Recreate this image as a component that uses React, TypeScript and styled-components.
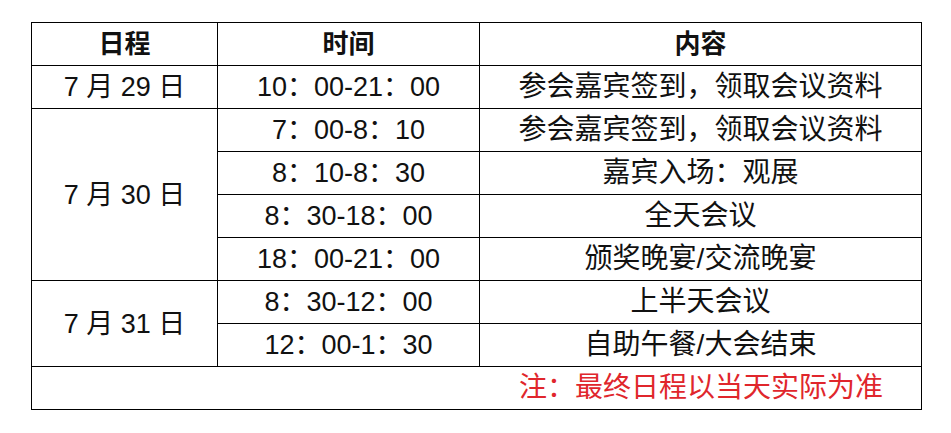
import React from 'react';
import styled, {createGlobalStyle} from 'styled-components';

const GlobalStyle = createGlobalStyle`
  html, body {
    margin: 0;
    background: #fff;
  }
`;

type Slot = {time: string, content: string};
type Day = {date: string, slots: Slot[]};

const schedule: Day[] = [
  {date: '7 月 29 日', slots: [
    {time: '10：00-21：00', content: '参会嘉宾签到，领取会议资料'},
  ]},
  {date: '7 月 30 日', slots: [
    {time: '7：00-8：10', content: '参会嘉宾签到，领取会议资料'},
    {time: '8：10-8：30', content: '嘉宾入场：观展'},
    {time: '8：30-18：00', content: '全天会议'},
    {time: '18：00-21：00', content: '颁奖晚宴/交流晚宴'},
  ]},
  {date: '7 月 31 日', slots: [
    {time: '8：30-12：00', content: '上半天会议'},
    {time: '12：00-1：30', content: '自助午餐/大会结束'},
  ]},
];

const App = () => {
  return (
    <>
      <GlobalStyle/>
      <Page>
        <Table>
          <colgroup>
            <col style={{width: 186}}/>
            <col style={{width: 262}}/>
            <col style={{width: 442}}/>
          </colgroup>
          <thead>
            <tr>
              <Head>日程</Head>
              <Head>时间</Head>
              <Head>内容</Head>
            </tr>
          </thead>
          <tbody>
            {schedule.map(day => day.slots.map((slot, i) => (
              <tr key={day.date + i}>
                {i === 0 && <Cell rowSpan={day.slots.length}>{day.date}</Cell>}
                <Cell>{slot.time}</Cell>
                <Cell $size={28}>{slot.content}</Cell>
              </tr>
            )))}
            <tr>
              <Note colSpan={3} $size={28}>注：最终日程以当天实际为准</Note>
            </tr>
          </tbody>
        </Table>
      </Page>
    </>
  );
}

const Page = styled.div`
  padding: 22px 0 0 31px;
`

const Table = styled.table`
  border-collapse: collapse;
  table-layout: fixed;
  width: 891px;
  font-family: "Liberation Sans", "Noto Sans CJK SC", sans-serif;
  color: #111;
`

const Cell = styled.td<{$size?: number}>`
  border: 1px solid #000;
  height: 42px;
  padding: 0;
  text-align: center;
  vertical-align: middle;
  font-size: ${p => p.$size || 27}px;
  line-height: 42px;
  white-space: nowrap;
`

const Head = styled(Cell).attrs({as: 'th'})`
  font-weight: bold;
  font-size: 26px;
`

const Note = styled(Cell)`
  text-align: right;
  padding-right: 38px;
  color: #e0262c;
`

export default App;
